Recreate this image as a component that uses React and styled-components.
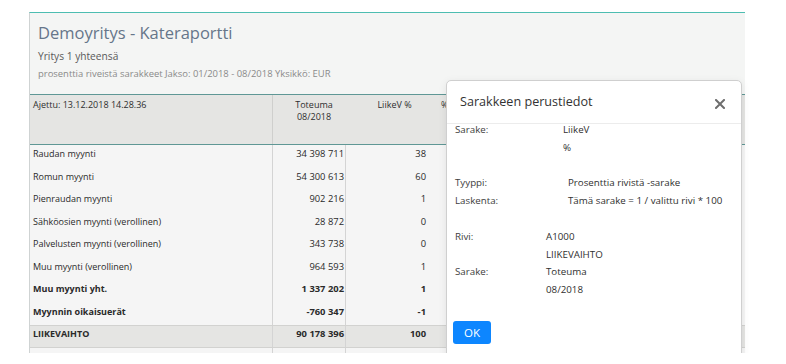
import React from "react";
import styled, { createGlobalStyle } from "styled-components";

const GlobalStyle = createGlobalStyle`
  html, body { margin: 0; padding: 0; background: #ffffff; }
  body { font-family: "Open Sans", "DejaVu Sans", sans-serif; }
  * { box-sizing: border-box; }
`;

const Viewport = styled.div`
  position: relative;
  width: 786px;
  height: 353px;
  overflow: hidden;
  padding: 12px 0 0 29px;
  background: #ffffff;
`;

const Panel = styled.section`
  width: 716px;
  height: 100%;
  border-top: 1px solid #4dbdb1;
  border-left: 1px solid #cfd3d3;
  background: #f4f5f4;
  display: flex;
  flex-direction: column;
  overflow: hidden;
`;

const PanelHead = styled.header`
  padding: 9px 8px 0;
  height: 81px;
  flex-shrink: 0;
  display: flex;
  flex-direction: column;
`;

const Title = styled.h1`
  margin: 0;
  font-size: 16.5px;
  line-height: 22px;
  font-weight: 400;
  color: #66768a;
`;

const SubTitle = styled.div`
  margin-top: ${(p) => p.$mt}px;
  font-size: ${(p) => p.$size}px;
  line-height: 14px;
  color: ${(p) => p.$color};
`;

const Table = styled.div`
  display: flex;
  flex-direction: column;
  background: #f5f5f5;
  flex: 1;
  min-height: 0;
`;

const cols = "243px 73px 90px 1fr";

const HeadRow = styled.div`
  display: grid;
  grid-template-columns: ${cols};
  height: 51px;
  flex-shrink: 0;
  border-top: 1px solid #5f9795;
  border-bottom: 1px solid #5f9795;
  background: #e5e5e3;
  font-size: 9px;
  line-height: 12px;
  color: #2e2e2e;
`;

const HeadCell = styled.div`
  padding: 4px 3px 0 ${(p) => p.$pl || 3}px;
  text-align: ${(p) => p.$align || "left"};
  border-right: ${(p) => (p.$border ? "1px solid #cfcfcd" : "none")};
  white-space: nowrap;
  overflow: hidden;
`;

const Row = styled.div`
  display: grid;
  grid-template-columns: ${cols};
  height: ${(p) => (p.$total ? "23px" : "22.5px")};
  background: ${(p) => (p.$total ? "#e5e5e3" : "#f5f5f5")};
  border-top: ${(p) => (p.$total ? "1px solid #d2d2d0" : "none")};
  border-bottom: ${(p) => (p.$total ? "1px solid #d2d2d0" : "none")};
  font-size: 9px;
  line-height: 13px;
  font-weight: ${(p) => (p.$bold ? 700 : 400)};
  color: #2a2a2a;
  flex-shrink: 0;
`;

const Cell = styled.div`
  padding: ${(p) => (p.$total ? "1px" : "2px")} ${(p) => p.$pr ?? 3}px 0 ${(p) => p.$pl ?? 3}px;
  text-align: ${(p) => p.$align || "left"};
  border-right: ${(p) => (p.$border ? "1px solid #d4d4d4" : "none")};
  white-space: nowrap;
  overflow: hidden;
  font-size: ${(p) => (p.$num ? "9.4px" : "inherit")};
`;

const Dialog = styled.div`
  position: absolute;
  left: 446px;
  top: 80px;
  width: 296px;
  height: 300px;
  background: #ffffff;
  border: 1px solid #cfcfcf;
  border-radius: 5px;
  box-shadow: 0 2px 8px rgba(0, 0, 0, 0.08);
  display: flex;
  flex-direction: column;
  overflow: hidden;
`;

const DialogHeader = styled.div`
  height: 43px;
  flex-shrink: 0;
  display: flex;
  align-items: center;
  justify-content: space-between;
  padding: 0 16px 0 13px;
  border-bottom: 1px solid #ececec;
`;

const DialogTitle = styled.div`
  font-size: 12.6px;
  color: #333;
  margin-top: -2px;
`;

const CloseButton = styled.button`
  border: 0;
  background: none;
  padding: 0;
  width: 10px;
  height: 10px;
  margin-top: 3px;
  display: flex;
  cursor: pointer;
`;

const DialogBody = styled.div`
  flex: 1;
  overflow: hidden;
  padding: 0 8px;
`;

const BodyInner = styled.div`
  margin-top: -3px;
  display: flex;
  flex-direction: column;
`;

const Group = styled.div`
  display: grid;
  grid-template-columns: ${(p) => p.$label}px 1fr;
  grid-auto-rows: 17.8px;
  margin-bottom: 17.8px;
  font-size: 9.75px;
  line-height: 17.8px;
  color: #333;
`;

const Label = styled.div`
  color: #3d3d3d;
`;

const Value = styled.div`
  color: #2f2f2f;
  white-space: nowrap;
`;

const OkButton = styled.button`
  margin: 4px 0 0 -2px;
  width: 38px;
  height: 23px;
  border: 0;
  border-radius: 3px;
  background: #0d86ff;
  color: #ffffff;
  font-family: "Open Sans", sans-serif;
  font-size: 11.5px;
  line-height: 23px;
  padding: 0;
  cursor: pointer;
`;

const rows = [
  { name: "Raudan myynti", v: "34 398 711", p: "38" },
  { name: "Romun myynti", v: "54 300 613", p: "60" },
  { name: "Pienraudan myynti", v: "902 216", p: "1" },
  { name: "Sähköosien myynti (verollinen)", v: "28 872", p: "0" },
  { name: "Palvelusten myynti (verollinen)", v: "343 738", p: "0" },
  { name: "Muu myynti (verollinen)", v: "964 593", p: "1" },
  { name: "Muu myynti yht.", v: "1 337 202", p: "1", bold: true },
  { name: "Myynnin oikaisuerät", v: "-760 347", p: "-1", bold: true },
  { name: "LIIKEVAIHTO", v: "90 178 396", p: "100", bold: true, total: true },
  { name: "Liiketoiminnan muut tuotot", v: "45 141", p: "0" },
];

const groups = [
  { label: 108, items: [["Sarake:", "LiikeV"], ["", "%"]] },
  { label: 113, items: [["Tyyppi:", "Prosenttia rivistä -sarake"], ["Laskenta:", "Tämä sarake = 1 / valittu rivi * 100"]] },
  { label: 91, items: [["Rivi:", "A1000"], ["", "LIIKEVAIHTO"], ["Sarake:", "Toteuma"], ["", "08/2018"]] },
];

export default function App() {
  return (
    <>
      <GlobalStyle />
      <Viewport>
        <Panel>
          <PanelHead>
            <Title>Demoyritys - Kateraportti</Title>
            <SubTitle $mt={5} $size={10.2} $color="#5a5a5a">Yritys 1 yhteensä</SubTitle>
            <SubTitle $mt={4} $size={9.45} $color="#8a8a8a">
              prosenttia riveistä sarakkeet Jakso: 01/2018 - 08/2018 Yksikkö: EUR
            </SubTitle>
          </PanelHead>
          <Table>
            <HeadRow>
              <HeadCell $border>Ajettu: 13.12.2018 14.28.36</HeadCell>
              <HeadCell $align="center" $pl={12}>
                Toteuma
                <br />
                08/2018
              </HeadCell>
              <HeadCell $align="center" $pl={10}>LiikeV %</HeadCell>
              <HeadCell $pl={5}>%</HeadCell>
            </HeadRow>
            {rows.map((r) => (
              <Row key={r.name} $bold={r.bold} $total={r.total}>
                <Cell $border $total={r.total}>{r.name}</Cell>
                <Cell $border $num $total={r.total} $align="right" $pr={1}>{r.v}</Cell>
                <Cell $num $total={r.total} $align="right" $pr={10}>{r.p}</Cell>
                <Cell $total={r.total} />
              </Row>
            ))}
          </Table>
        </Panel>
        <Dialog>
          <DialogHeader>
            <DialogTitle>Sarakkeen perustiedot</DialogTitle>
            <CloseButton aria-label="Sulje">
              <svg width="10" height="10" viewBox="0 0 10 10">
                <path d="M1 1 L9 9 M9 1 L1 9" stroke="#6e6e6e" strokeWidth="2" strokeLinecap="square" />
              </svg>
            </CloseButton>
          </DialogHeader>
          <DialogBody>
            <BodyInner>
              {groups.map((g, i) => (
                <Group key={i} $label={g.label}>
                  {g.items.map(([l, v], j) => (
                    <React.Fragment key={j}>
                      <Label>{l}</Label>
                      <Value>{v}</Value>
                    </React.Fragment>
                  ))}
                </Group>
              ))}
              <OkButton>OK</OkButton>
            </BodyInner>
          </DialogBody>
        </Dialog>
      </Viewport>
    </>
  );
}
